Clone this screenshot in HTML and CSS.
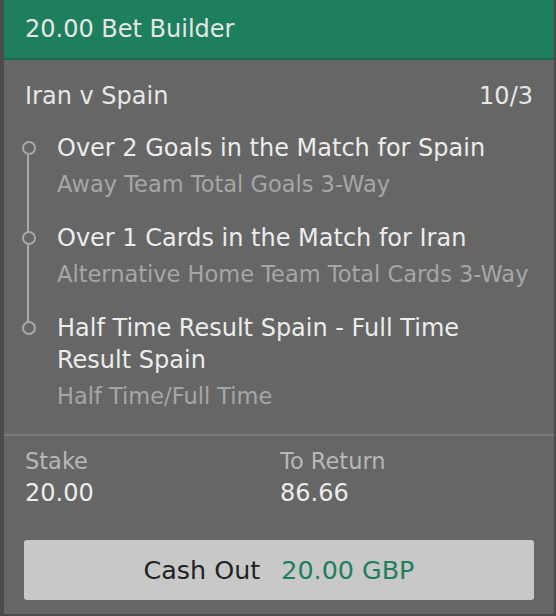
FILE: index.html
```html
<!DOCTYPE html>
<html lang="en">
<head>
  <meta charset="UTF-8">
  <meta name="viewport" content="width=device-width, initial-scale=1.0">
  <title>Bet Builder</title>
  <link rel="stylesheet" href="styles.css">
</head>
<body>

  <div class="bet">
    <div class="bet-head">20.00 Bet Builder</div>

    <div class="bet-event">
      <span>Iran v Spain</span>
      <span>10/3</span>
    </div>

    <div class="legs">
      <div class="leg">
        <div class="leg-title">Over 2 Goals in the Match for Spain</div>
        <div class="leg-market">Away Team Total Goals 3-Way</div>
      </div>
      <div class="leg">
        <div class="leg-title">Over 1 Cards in the Match for Iran</div>
        <div class="leg-market">Alternative Home Team Total Cards 3-Way</div>
      </div>
      <div class="leg">
        <div class="leg-title">Half Time Result Spain - Full Time Result Spain</div>
        <div class="leg-market">Half Time/Full Time</div>
      </div>
    </div>

    <div class="bet-foot">
      <div class="totals">
        <div>
          <div class="label">Stake</div>
          <div class="value">20.00</div>
        </div>
        <div>
          <div class="label">To Return</div>
          <div class="value">86.66</div>
        </div>
      </div>

      <button class="cashout">Cash Out <span class="amount">20.00 GBP</span></button>
    </div>
  </div>

</body>
</html>
```

FILE: styles.css
```css
body {
  margin: 0;
  font-family: "DejaVu Sans", Verdana, sans-serif;
  background-color: #4b4b4b;
}
.bet {
  width: 550px;
  height: 614px;
  margin-left: 4px;
  background-color: #666666;
  color: #e6e6e6;
}
.bet-head {
  height: 58px;
  line-height: 58px;
  padding: 0 21px;
  font-size: 24px;
  background-color: #1e7f5e;
  border-bottom: 2px solid #1a6c50;
}
.bet-event {
  display: flex;
  justify-content: space-between;
  padding: 20px 21px 0 21px;
  font-size: 24px;
  line-height: 32px;
}
.legs {
  padding: 20px 21px 0 53px;
}
.leg {
  position: relative;
  padding-bottom: 22px;
}
.leg::before {
  content: "";
  position: absolute;
  left: -35px;
  top: 9px;
  width: 10px;
  height: 10px;
  border: 2px solid #a8a8a8;
  border-radius: 50%;
}
.leg::after {
  content: "";
  position: absolute;
  left: -30px;
  top: 23px;
  bottom: -10px;
  width: 2px;
  background-color: #a8a8a8;
}
.leg:last-child::after {
  display: none;
}
.leg-title {
  font-size: 24px;
  line-height: 32px;
  color: #ececec;
}
.leg-market {
  margin-top: 4px;
  font-size: 22.5px;
  line-height: 32px;
  color: #a6a6a6;
}
.bet-foot {
  border-top: 2px solid #797979;
  padding: 10px 20px 0 20px;
}
.totals {
  display: grid;
  grid-template-columns: 255px 1fr;
  padding-left: 1px;
}
.label {
  font-size: 22.5px;
  line-height: 30px;
  color: #b8b8b8;
}
.value {
  font-size: 24px;
  line-height: 34px;
  color: #ececec;
}
.cashout {
  display: flex;
  justify-content: center;
  align-items: center;
  gap: 21px;
  width: 510px;
  height: 60px;
  margin-top: 30px;
  padding: 0;
  border: none;
  border-radius: 3px;
  background-color: #c8c8c8;
  font-family: inherit;
  font-size: 25.4px;
  color: #222222;
}
.amount {
  color: #1e7f5e;
}
```
